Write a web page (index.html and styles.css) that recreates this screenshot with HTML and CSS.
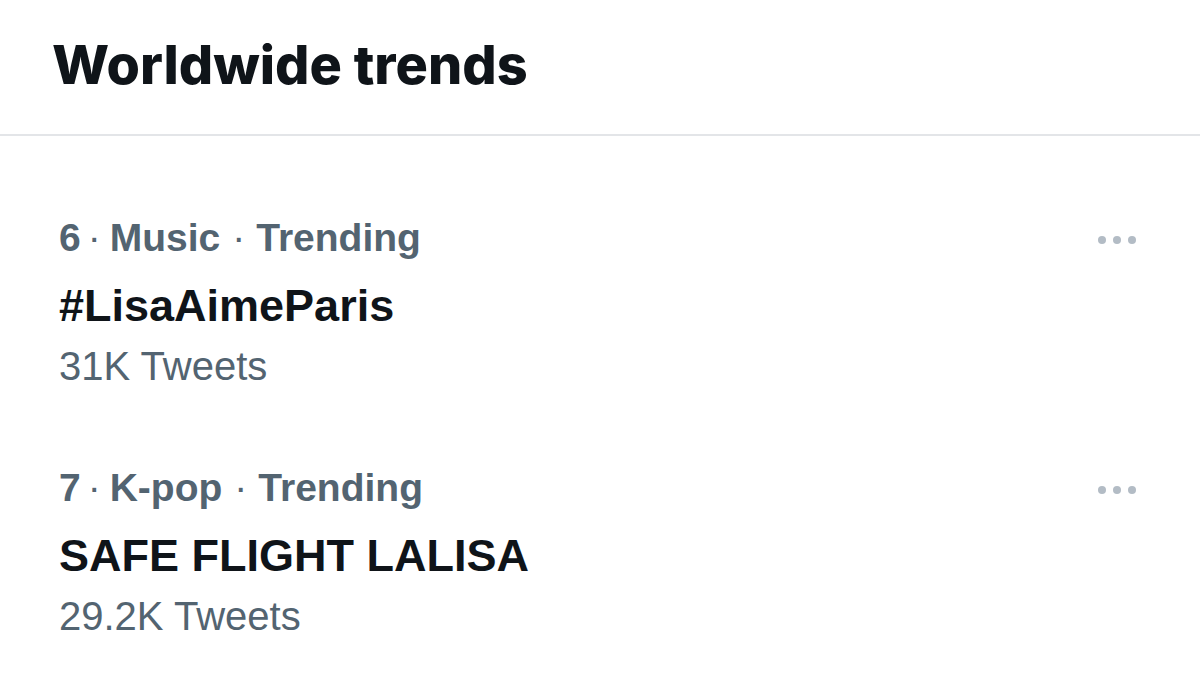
FILE: index.html
```html
<!DOCTYPE html>
<html>
<head>
<meta charset="utf-8">
<link rel="stylesheet" href="styles.css">
</head>
<body>
<div class="page">
  <header class="header">
    <h1 class="title">Worldwide trends</h1>
  </header>
  <main class="trends">
    <div class="trend">
      <div class="trend-text">
        <div class="meta">6<span class="sep sep-first">·</span>Music<span class="sep">·</span>Trending</div>
        <div class="name">#LisaAimeParis</div>
        <div class="count">31K Tweets</div>
      </div>
      <div class="more"><span></span><span></span><span></span></div>
    </div>
    <div class="trend">
      <div class="trend-text">
        <div class="meta">7<span class="sep sep-first">·</span>K-pop<span class="sep">·</span>Trending</div>
        <div class="name">SAFE FLIGHT LALISA</div>
        <div class="count">29.2K Tweets</div>
      </div>
      <div class="more"><span></span><span></span><span></span></div>
    </div>
  </main>
</div>
</body>
</html>
```
FILE: styles.css
```css
html, body {
  margin: 0;
  padding: 0;
  background: #ffffff;
}
.page {
  width: 1200px;
  height: 675px;
  overflow: hidden;
  font-family: "Liberation Sans", Arial, sans-serif;
}
.header {
  height: 136px;
  border-bottom: 2px solid #e3e5e8;
  padding: 38px 0 0 52px;
  box-sizing: border-box;
}
.title {
  margin: 0;
  font-family: Inter, "Liberation Sans", sans-serif;
  font-size: 54px;
  line-height: 54px;
  font-weight: 800;
  color: #0f1419;
  letter-spacing: 0;
}
.trends {
  padding: 78px 0 0 59px;
  display: flex;
  flex-direction: column;
  gap: 70px;
}
.trend {
  display: flex;
  justify-content: space-between;
  align-items: flex-start;
  padding-right: 64px;
}
.trend-text {
  display: flex;
  flex-direction: column;
}
.meta {
  font-size: 39px;
  font-weight: 700;
  color: #536471;
  line-height: 48px;
}
.sep {
  font-weight: 400;
  margin: 0 11px 0 12px;
}
.sep-first {
  margin: 0 9px 0 7px;
}
.name {
  font-size: 45px;
  font-weight: 700;
  color: #0f1419;
  line-height: 60px;
  margin-top: 14px;
}
.count {
  font-size: 40px;
  color: #536471;
  line-height: 56px;
  margin-top: 2px;
}
.more {
  display: flex;
  gap: 7px;
  padding-top: 22px;
}
.more span {
  width: 8px;
  height: 8px;
  border-radius: 50%;
  background: #b3bcc5;
}
```
